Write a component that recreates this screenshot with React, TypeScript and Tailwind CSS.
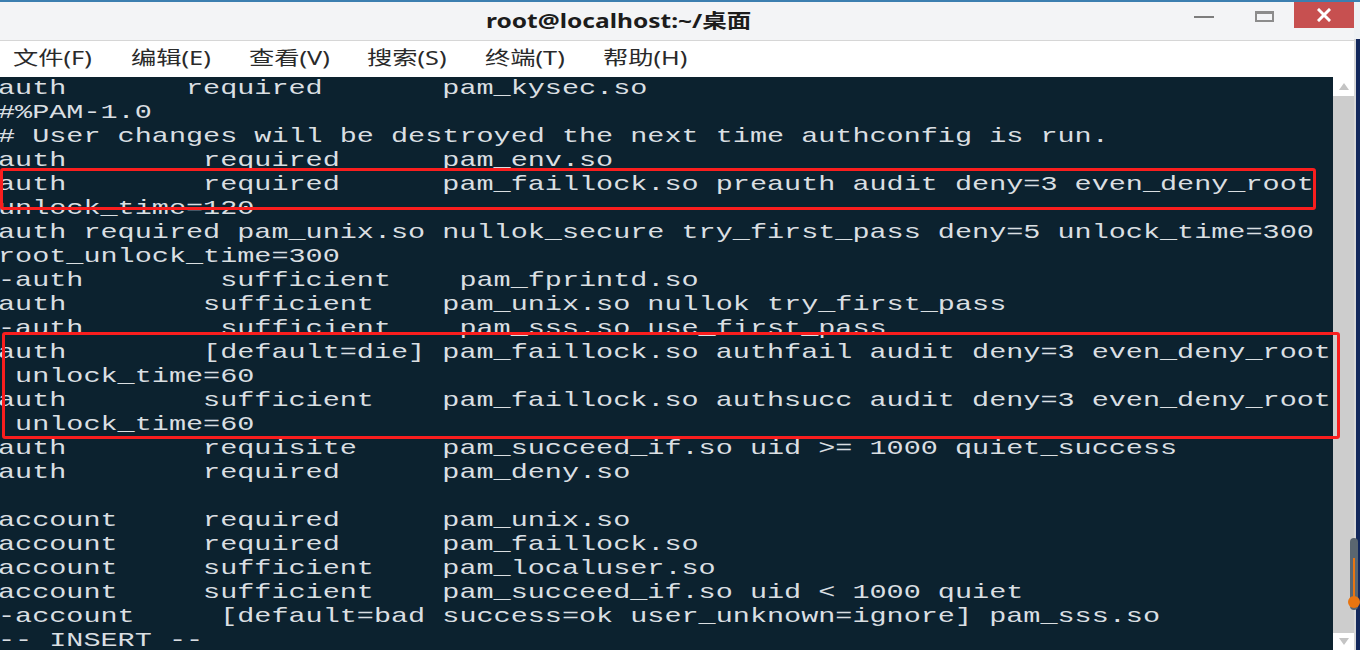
const lines = [
  "auth       required       pam_kysec.so",
  "#%PAM-1.0",
  "# User changes will be destroyed the next time authconfig is run.",
  "auth        required      pam_env.so",
  "auth        required      pam_faillock.so preauth audit deny=3 even_deny_root",
  "unlock_time=120",
  "auth required pam_unix.so nullok_secure try_first_pass deny=5 unlock_time=300",
  "root_unlock_time=300",
  "-auth        sufficient    pam_fprintd.so",
  "auth        sufficient    pam_unix.so nullok try_first_pass",
  "-auth        sufficient    pam_sss.so use_first_pass",
  "auth        [default=die] pam_faillock.so authfail audit deny=3 even_deny_root",
  " unlock_time=60",
  "auth        sufficient    pam_faillock.so authsucc audit deny=3 even_deny_root",
  " unlock_time=60",
  "auth        requisite     pam_succeed_if.so uid >= 1000 quiet_success",
  "auth        required      pam_deny.so",
  "",
  "account     required      pam_unix.so",
  "account     required      pam_faillock.so",
  "account     sufficient    pam_localuser.so",
  "account     sufficient    pam_succeed_if.so uid < 1000 quiet",
  "-account     [default=bad success=ok user_unknown=ignore] pam_sss.so",
  "-- INSERT --",
]

const menus = ["文件(F)", "编辑(E)", "查看(V)", "搜索(S)", "终端(T)", "帮助(H)"]

function TitleBar() {
  return (
    <div className="h-[39px] flex items-start bg-[#f3f4f6] border-b border-[#d6d6d6]">
      <div className="flex-1 h-full flex items-center pl-[486px]">
        <span className="inline-block origin-left scale-x-[1.29] text-[19px] font-bold text-[#1c1c1c] font-['Noto_Sans','Noto_Sans_CJK_SC',sans-serif] leading-none">
          root@localhost:~/桌面
        </span>
      </div>
      <div className="flex">
        <div className="w-[60px] h-[26px] flex items-center justify-center">
          <div className="w-[20px] h-[2px] bg-[#7d7d7d] mt-[4px]" />
        </div>
        <div className="w-[60px] h-[26px] flex items-center justify-center">
          <div className="w-[19px] h-[11px] border-2 border-t-[3px] border-[#8c8c8c] mt-[2px]" />
        </div>
        <div className="w-[60px] h-[26px] flex items-center justify-center bg-[#c75050]">
          <svg width="14" height="14" viewBox="0 0 14 14">
            <path d="M2 2 L12 12 M12 2 L2 12" stroke="#fff" strokeWidth="3" strokeLinecap="square" />
          </svg>
        </div>
      </div>
    </div>
  )
}

function MenuBar() {
  return (
    <div className="h-[36px] flex items-center pl-[13px] bg-white">
      {menus.map((m) => (
        <div key={m} className="w-[118px]">
          <span className="inline-block origin-left scale-x-[1.33] text-[19px] text-[#2a2a2a] font-['Noto_Sans','Noto_Sans_CJK_SC',sans-serif] leading-none">
            {m}
          </span>
        </div>
      ))}
    </div>
  )
}

function Scrollbar() {
  return (
    <div className="w-[21px] flex flex-col bg-[#cdcdcd]">
      <div className="h-[19px] bg-white flex items-center justify-center">
        <svg width="10" height="7" viewBox="0 0 10 7">
          <path d="M5 0 L10 7 L0 7 Z" fill="#c4c4c4" />
        </svg>
      </div>
      <div className="flex-1" />
      <div className="h-[17px] bg-white flex items-center justify-center">
        <svg width="10" height="7" viewBox="0 0 10 7">
          <path d="M0 0 L10 0 L5 7 Z" fill="#c4c4c4" />
        </svg>
      </div>
    </div>
  )
}

export default function App() {
  return (
    <div className="relative w-[1360px] h-[650px] overflow-hidden flex border-t-2 border-[#3c7fb0] bg-white">
      <div className="flex-1 min-w-0 flex flex-col">
        <TitleBar />
        <MenuBar />
        <div className="flex-1 flex min-h-0">
          <div className="flex-1 overflow-hidden bg-[#0c222f]">
            <div className="-ml-[2px] w-[985px] origin-left scale-x-[1.356] font-['Liberation_Mono',monospace] text-[21px] leading-[24px] text-[#dadfe2]">
              {lines.map((l, i) => (
                <div key={i} className="h-[24px] whitespace-pre">
                  {l}
                </div>
              ))}
            </div>
          </div>
          <Scrollbar />
        </div>
      </div>
      <div className="w-[6px] flex flex-col">
        <div className="h-[37px] bg-[#eef1f4]" />
        <div className="flex-1 bg-[#13285c] border-l-2 border-[#d8d8d8]" />
      </div>

      {/* red highlight boxes */}
      <div className="absolute left-0 top-[166px] w-[1316px] h-[42px] border-[3px] border-[#fa1e1e] rounded-[3px]" />
      <div className="absolute left-[2px] top-[330px] w-[1338px] h-[107px] border-[3px] border-[#fa1e1e] rounded-[3px]" />

      {/* scroll thumb overlay */}
      <div className="absolute left-[1350px] top-[536px] w-[8px] h-[72px] rounded-full bg-[#5a6670]">
        <div className="absolute left-[3px] top-[20px] w-[2px] h-[42px] bg-[#e87511]" />
        <div className="absolute -left-[2px] top-[58px] w-[12px] h-[12px] rounded-full bg-[#e87511]" />
      </div>
    </div>
  )
}
